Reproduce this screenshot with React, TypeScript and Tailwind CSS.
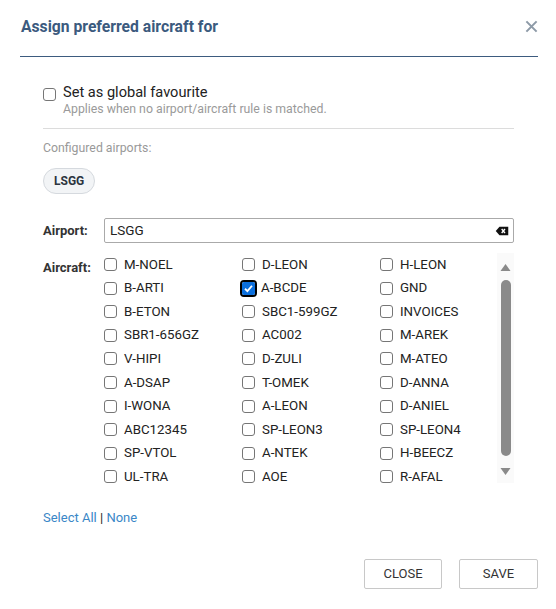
import React from 'react';

const aircraft: string[][] = [
  ['M-NOEL', 'D-LEON', 'H-LEON'],
  ['B-ARTI', 'A-BCDE', 'GND'],
  ['B-ETON', 'SBC1-599GZ', 'INVOICES'],
  ['SBR1-656GZ', 'AC002', 'M-AREK'],
  ['V-HIPI', 'D-ZULI', 'M-ATEO'],
  ['A-DSAP', 'T-OMEK', 'D-ANNA'],
  ['I-WONA', 'A-LEON', 'D-ANIEL'],
  ['ABC12345', 'SP-LEON3', 'SP-LEON4'],
  ['SP-VTOL', 'A-NTEK', 'H-BEECZ'],
  ['UL-TRA', 'AOE', 'R-AFAL'],
];

const Box: React.FC<{ checked?: boolean }> = ({ checked }) =>
  checked ? (
    <span className="flex h-[17px] w-[17px] items-center justify-center rounded-[4px] border-2 border-black bg-white">
      <span className="flex h-[13px] w-[13px] items-center justify-center rounded-[2px] bg-[#0b6fdd]">
        <svg viewBox="0 0 12 12" className="h-[11px] w-[11px]">
          <path d="M2.2 6.3 L4.8 8.8 L9.8 3" fill="none" stroke="white" strokeWidth="2" />
        </svg>
      </span>
    </span>
  ) : (
    <span className="block h-[13px] w-[13px] rounded-[3px] border border-[#767676] bg-white" />
  );

export default function App() {
  return (
    <div className="h-[609px] w-[556px] bg-white font-['Roboto',sans-serif] text-[#222]">
      {/* header */}
      <div className="ml-[20px] mr-[18px] flex h-[57px] items-center justify-between border-b border-[#3d5b7f] pb-[3px]">
        <h2 className="pl-[1px] text-[15.7px] font-bold text-[#3b5a7e]">Assign preferred aircraft for</h2>
        <svg viewBox="0 0 14 14" className="h-[13px] w-[13px]">
          <path d="M1.5 1.5 L12.5 12.5 M12.5 1.5 L1.5 12.5" stroke="#8d9aa7" strokeWidth="2.2" />
        </svg>
      </div>

      <div className="pl-[43px] pr-[42px]">
        {/* global favourite */}
        <div className="mt-[26px] flex items-start gap-[7px]">
          <span className="mt-[5px]"><Box /></span>
          <div>
            <div className="text-[14.6px] leading-[19px] text-[#222]">Set as global favourite</div>
            <div className="text-[12.3px] leading-[14px] text-[#9a9a9a]">Applies when no airport/aircraft rule is matched.</div>
          </div>
        </div>
        <div className="mt-[12px] border-t border-[#dcdcdc]" />

        <div className="mt-[12px] text-[12.3px] leading-[15px] text-[#999]">Configured airports:</div>
        <div className="mt-[12px] flex">
          <span className="flex h-[26px] items-center rounded-full border border-[#d5d9de] bg-[#f2f4f6] px-[10px] text-[12px] font-bold text-[#2c3440]">
            LSGG
          </span>
        </div>

        {/* airport */}
        <div className="mt-[24px] flex items-center">
          <span className="w-[61px] text-[13px] font-bold text-[#333]">Airport:</span>
          <div className="flex h-[25px] flex-1 items-center justify-between rounded-[2px] border border-[#aaa] pl-[5px] pr-[4px]">
            <span className="text-[13.5px] text-[#222]">LSGG</span>
            <svg viewBox="0 0 16 12" className="h-[10px] w-[14px]">
              <path d="M0.5 6 L5 1 H15.5 V11 H5 Z" fill="#111" />
              <path d="M7.6 3.6 L11.6 8.4 M11.6 3.6 L7.6 8.4" stroke="white" strokeWidth="1.6" />
            </svg>
          </div>
        </div>

        {/* aircraft */}
        <div className="mt-[10px] flex">
          <span className="w-[61px] pt-[5px] text-[13px] font-bold text-[#333]">Aircraft:</span>
          <div className="flex h-[230px] flex-1 overflow-hidden">
            <div className="flex-1">
              {aircraft.map((row, i) => (
                <div key={i} className="grid h-[23.56px] grid-cols-[138px_138px_1fr] items-center">
                  {row.map((name) => (
                    <label key={name} className="flex items-center gap-[7px] text-[13.3px] text-[#222]">
                      <span className="flex w-[13px] justify-center">
                        <Box checked={name === 'A-BCDE'} />
                      </span>
                      <span className={name === 'A-BCDE' ? 'ml-[-1px]' : ''}>{name}</span>
                    </label>
                  ))}
                </div>
              ))}
            </div>
            {/* scrollbar */}
            <div className="flex w-[17px] flex-col items-center bg-[#fafafa] pb-[8px] pt-[11px]">
              <svg viewBox="0 0 10 7" className="h-[7px] w-[11px]"><path d="M0 7 L5 0 L10 7 Z" fill="#8a8a8a" /></svg>
              <div className="mt-[9px] h-[176px] w-[10px] rounded-full bg-[#8a8a8a]" />
              <div className="flex-1" />
              <svg viewBox="0 0 10 7" className="h-[7px] w-[11px]"><path d="M0 0 L10 0 L5 7 Z" fill="#8a8a8a" /></svg>
            </div>
          </div>
        </div>

        <div className="mt-[25px] text-[13px] text-[#3a87c7]">
          <span>Select All</span>
          <span className="text-[#222]"> | </span>
          <span>None</span>
        </div>
      </div>

      {/* footer */}
      <div className="mr-[18px] mt-[31px] flex justify-end gap-[17px]">
        <button className="h-[30px] w-[78px] rounded-[2px] border border-[#c8c8c8] bg-white text-[13px] text-[#333]">CLOSE</button>
        <button className="h-[30px] w-[79px] rounded-[2px] border border-[#c8c8c8] bg-white text-[13px] text-[#333]">SAVE</button>
      </div>
    </div>
  );
}
